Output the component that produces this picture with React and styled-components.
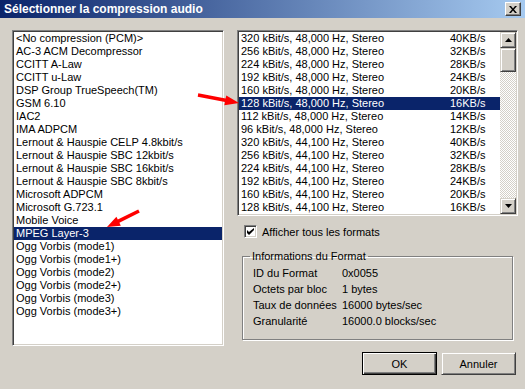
import React from 'react'
import styled, { createGlobalStyle } from 'styled-components'

const GlobalStyle = createGlobalStyle`
  body {
    margin: 0;
    font-family: "Liberation Sans", Arial, sans-serif;
    font-size: 11px;
  }
`

const Window = styled.div`
  position: relative;
  width: 525px;
  height: 389px;
  background: #d4d0c8;
  display: flex;
  flex-direction: column;
  overflow: hidden;
  color: #000;
`
const TitleBar = styled.div`
  height: 18px;
  display: flex;
  align-items: center;
  justify-content: space-between;
  padding: 0 4px 0 4px;
  background: linear-gradient(to right, #0a246a, #a6caf0);
  color: #fff;
  font-weight: bold;
  font-size: 12px;
`
const CloseBtn = styled.div`
  width: 14px;
  height: 12px;
  display: flex;
  align-items: center;
  justify-content: center;
  background: #d4d0c8;
  border: 1px solid;
  border-color: #fff #404040 #404040 #fff;
  box-shadow: inset -1px -1px #808080;
`
const Body = styled.div`
  display: grid;
  grid-template-columns: 212px 281px;
  column-gap: 13px;
  padding: 12px 0 0 12px;
`
const Sunken = styled.div`
  background: #fff;
  border: 1px solid;
  border-color: #808080 #fff #fff #808080;
  box-shadow: inset 1px 1px #404040, inset -1px -1px #d4d0c8;
  padding: 1px;
`
const LeftList = styled(Sunken)`
  height: 312px;
  overflow: hidden;
`
const Item = styled.div`
  height: 13px;
  line-height: 13px;
  padding-left: 2px;
  white-space: nowrap;
  background: ${p => (p.$selected ? '#0a246a' : 'transparent')};
  color: ${p => (p.$selected ? '#fff' : '#000')};
`
const FormatItem = styled(Item)`
  display: grid;
  grid-template-columns: 209px auto;
`
const RightCol = styled.div`
  display: flex;
  flex-direction: column;
`
const RightList = styled(Sunken)`
  height: 182px;
  display: flex;
`
const Rows = styled.div`
  flex: 1;
  overflow: hidden;
`
const ScrollBar = styled.div`
  width: 16px;
  display: flex;
  flex-direction: column;
  background: repeating-conic-gradient(#fff 0 25%, #d4d0c8 0 50%) 0 0 / 2px 2px;
`
const Raised = styled.div`
  box-sizing: border-box;
  background: #d4d0c8;
  border: 1px solid;
  border-color: #d4d0c8 #404040 #404040 #d4d0c8;
  box-shadow: inset 1px 1px #fff, inset -1px -1px #808080;
`
const ArrowBtn = styled(Raised)`
  width: 16px;
  height: 16px;
  display: flex;
  align-items: center;
  justify-content: center;
`
const Thumb = styled(Raised)`
  width: 16px;
  height: 24px;
`
const Track = styled.div`
  flex: 1;
`
const CheckRow = styled.label`
  display: flex;
  align-items: center;
  gap: 5px;
  margin-top: 9px;
  padding-left: 7px;
  height: 13px;
`
const CheckBox = styled(Sunken)`
  width: 9px;
  height: 9px;
  display: flex;
  align-items: center;
  justify-content: center;
`
const Group = styled.fieldset`
  margin: 12px 5px 0 5px;
  padding: 2px 0 0 10px;
  height: 86px;
  border: 1px solid #808080;
  box-shadow: 1px 1px #fff, inset 1px 1px #fff;
`
const Legend = styled.legend`
  padding: 0 2px;
  margin-left: -3px;
  line-height: 13px;
`
const InfoGrid = styled.div`
  display: grid;
  grid-template-columns: 89px auto;
  grid-auto-rows: 16px;
  align-items: center;
`
const Buttons = styled.div`
  display: flex;
  justify-content: flex-end;
  gap: 4px;
  margin-top: 12px;
  padding-right: 2px;
`
const Button = styled(Raised)`
  width: 75px;
  height: 23px;
  display: flex;
  align-items: center;
  justify-content: center;
  ${p => p.$default && `
    border: 1px solid #000;
    box-shadow: inset 1px 1px #fff, inset -1px -1px #404040, inset -2px -2px #808080;
  `}
`
const Overlay = styled.svg`
  position: absolute;
  left: 0;
  top: 0;
  pointer-events: none;
`

const codecs = [
  '<No compression (PCM)>', 'AC-3 ACM Decompressor', 'CCITT A-Law', 'CCITT u-Law',
  'DSP Group TrueSpeech(TM)', 'GSM 6.10', 'IAC2', 'IMA ADPCM',
  'Lernout & Hauspie CELP 4.8kbit/s', 'Lernout & Hauspie SBC 12kbit/s',
  'Lernout & Hauspie SBC 16kbit/s', 'Lernout & Hauspie SBC 8kbit/s',
  'Microsoft ADPCM', 'Microsoft G.723.1', 'Mobile Voice', 'MPEG Layer-3',
  'Ogg Vorbis (mode1)', 'Ogg Vorbis (mode1+)', 'Ogg Vorbis (mode2)',
  'Ogg Vorbis (mode2+)', 'Ogg Vorbis (mode3)', 'Ogg Vorbis (mode3+)'
]

const rates = [[320, 40], [256, 32], [224, 28], [192, 24], [160, 20], [128, 16], [112, 14], [96, 12]]
const formats = [
  ...rates.map(([k, b]) => [`${k} kBit/s, 48,000 Hz, Stereo`, `${b}KB/s`]),
  ...rates.map(([k, b]) => [`${k} kBit/s, 44,100 Hz, Stereo`, `${b}KB/s`])
]

const info = [
  ['ID du Format', '0x0055'],
  ['Octets par bloc', '1 bytes'],
  ['Taux de données', '16000 bytes/sec'],
  ['Granularité', '16000.0 blocks/sec']
]

export default function App() {
  return (
    <Window>
      <GlobalStyle />
      <TitleBar>
        <span>Sélectionner la compression audio</span>
        <CloseBtn>
          <svg width="8" height="7" viewBox="0 0 8 7">
            <path d="M0 0h2l2 2.5L6 0h2L5 3.5 8 7H6L4 4.5 2 7H0l3-3.5z" fill="#000" />
          </svg>
        </CloseBtn>
      </TitleBar>
      <Body>
        <LeftList>
          {codecs.map(c => (
            <Item key={c} $selected={c === 'MPEG Layer-3'}>{c}</Item>
          ))}
        </LeftList>
        <RightCol>
          <RightList>
            <Rows>
              {formats.map(([name, rate], i) => (
                <FormatItem key={i} $selected={i === 5}>
                  <span>{name}</span>
                  <span>{rate}</span>
                </FormatItem>
              ))}
            </Rows>
            <ScrollBar>
              <ArrowBtn>
                <svg width="7" height="4" viewBox="0 0 7 4"><path d="M3.5 0L7 4H0z" fill="#000" /></svg>
              </ArrowBtn>
              <Thumb />
              <Track />
              <ArrowBtn>
                <svg width="7" height="4" viewBox="0 0 7 4"><path d="M0 0h7L3.5 4z" fill="#000" /></svg>
              </ArrowBtn>
            </ScrollBar>
          </RightList>
          <CheckRow>
            <CheckBox>
              <svg width="7" height="7" viewBox="0 0 7 7">
                <path d="M0 2v3l2 2 5-5V-0L2 4z" fill="#000" />
              </svg>
            </CheckBox>
            <span>Afficher tous les formats</span>
          </CheckRow>
          <Group>
            <Legend>Informations du Format</Legend>
            <InfoGrid>
              {info.map(([k, v]) => (
                <React.Fragment key={k}>
                  <span>{k}</span>
                  <span>{v}</span>
                </React.Fragment>
              ))}
            </InfoGrid>
          </Group>
          <Buttons>
            <Button $default>OK</Button>
            <Button>Annuler</Button>
          </Buttons>
        </RightCol>
      </Body>
      <Overlay width="525" height="389">
        <polygon fill="#f00" points="198.3,93.3 225.6,98.6 226.3,95.4 239,103 224.3,105.2 225,102 197.7,96.7" />
        <polygon fill="#f00" points="138.2,209.4 117.8,219.6 116.4,216.7 107,227 120.8,225.7 119.4,222.8 139.8,212.6" />
      </Overlay>
    </Window>
  )
}
